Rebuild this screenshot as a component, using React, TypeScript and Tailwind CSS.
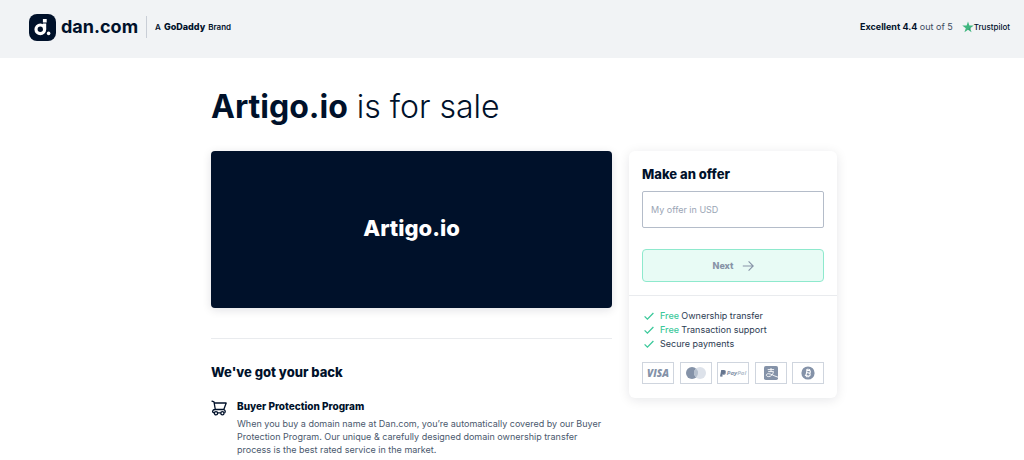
import type { ReactNode } from "react";

const perks = [
  { free: true, text: "Ownership transfer" },
  { free: true, text: "Transaction support" },
  { free: false, text: "Secure payments" },
];

function DanMark() {
  return (
    <svg viewBox="0 0 27 27" className="size-[27px]" aria-hidden="true">
      <rect width="27" height="27" rx="8" fill="#00112a" />
      <circle cx="11.3" cy="15.3" r="4.3" fill="none" stroke="#fff" strokeWidth="3.2" />
      <path d="M13.900 9.600h3.300v5.700h-3.300z" fill="#fff" />
      <path d="M13.900 5h3.800v3.600h-3.800z" fill="#fff" />
      <circle cx="19.600" cy="19.400" r="1.800" fill="#fff" />
    </svg>
  );
}

function PaymentBox({ label, children }: { label: string; children: ReactNode }) {
  return (
    <li
      aria-label={label}
      className="flex h-[22px] w-8 items-center justify-center border border-[#cfd5de] bg-white"
    >
      {children}
    </li>
  );
}

function Header() {
  return (
    <header className="flex h-[58px] items-center justify-between bg-[#f1f3f5] pr-[14px] pb-1 pl-[29px]">
      <div className="flex items-center">
        <a href="#home" className="flex items-center gap-[5px]">
          <DanMark />
          <span className="text-lg leading-6 font-bold">dan.com</span>
        </a>
        <div className="ml-2 flex h-[22px] items-center gap-[3px] border-l border-[#c9ced6] pl-2 text-[8px] font-semibold">
          <span>A</span>
          <span className="text-[9px] font-extrabold">GoDaddy</span>
          <span>Brand</span>
        </div>
      </div>
      <a href="#reviews" className="flex items-center text-[9px]">
        <span className="text-[#3c4a60]">
          <strong className="font-bold text-[#00112a]">Excellent 4.4</strong> out of 5
        </span>
        <svg viewBox="0 0 24 24" className="ml-[9px] size-3" aria-hidden="true">
          <path d="M12 .8l2.7 8.3h8.8l-7.1 5.2 2.7 8.400-7.100-5.200-7.100 5.200 2.700-8.400L.5 9.100h8.800z" fill="#3fb67f" />
          <path d="M17 16.200l-.6-1.900L12 17.500z" fill="#1d6b50" />
        </svg>
        <span className="text-[8px] font-medium">Trustpilot</span>
      </a>
    </header>
  );
}

function OfferCard() {
  return (
    <aside className="w-[208px] shrink-0 rounded-md bg-white shadow-[0_2px_12px_rgba(0,17,42,0.1)]">
      <form className="px-[13px] pt-[13px] pb-[13px]">
        <label htmlFor="offer" className="block text-[13px] leading-5 font-extrabold">
          Make an offer
        </label>
        <input
          id="offer"
          type="text"
          placeholder="My offer in USD"
          className="mt-[7px] block h-[37px] w-full rounded-xs border border-[#b4bcc9] bg-white px-2 text-[9px] outline-none placeholder:text-[#9aa5b5]"
        />
        <button
          type="button"
          className="mt-[21px] flex h-[33px] w-full items-center justify-center gap-2 rounded border border-[#8ee9cd] bg-[#e8fbf5] text-[9px] font-extrabold text-[#8793a7]"
        >
          Next
          <svg viewBox="0 0 12 12" className="size-3" fill="none" stroke="currentColor" strokeWidth="1.1" aria-hidden="true">
            <path d="M.8 6h10.400M6.600 1.400L11.200 6l-4.600 4.600" />
          </svg>
        </button>
      </form>
      <div className="border-t border-[#e9ebee] px-[13px] pt-[13px] pb-[14px]">
        <ul className="text-[9px] leading-[14px] text-[#2c3b52]">
          {perks.map((perk) => (
            <li key={perk.text} className="flex items-center gap-[6px] pl-[2px]">
              <svg viewBox="0 0 10 8" className="h-2 w-[10px]" fill="none" stroke="#3cc99b" strokeWidth="1.3" aria-hidden="true">
                <path d="M.6 4.400l2.800 2.700L9.400 1" />
              </svg>
              <span>
                {perk.free && <span className="font-medium text-[#3cc99b]">Free </span>}
                {perk.text}
              </span>
            </li>
          ))}
        </ul>
        <ul className="mt-[11px] flex justify-between text-[#8492a8]">
          <PaymentBox label="Visa">
            <span className="font-['Open_Sans',sans-serif] text-[10px] leading-none font-extrabold italic">VISA</span>
          </PaymentBox>
          <PaymentBox label="Mastercard">
            <svg viewBox="0 0 20 12" className="h-3 w-5" aria-hidden="true">
              <circle cx="6" cy="6" r="6" fill="#8492a8" />
              <circle cx="14" cy="6" r="6" fill="#dde2ea" />
              <path d="M10 1.500a6 6 0 0 1 0 9a6 6 0 0 1 0-9z" fill="#b5bfcd" />
            </svg>
          </PaymentBox>
          <PaymentBox label="PayPal">
            <svg viewBox="0 0 6 7" className="mr-px h-[7px] w-[6px]" aria-hidden="true">
              <path d="M1.200 0h2.600C5.400 0 6 .9 5.700 2.200 5.400 3.700 4.400 4.300 3 4.300H2.200L1.800 6.400H0z" fill="#66758e" />
              <path d="M5.700 1.800c.5 1.900-.5 3.200-2.400 3.200h-.6L2.300 7H1.400l.6-2.700h1c1.400 0 2.400-.8 2.700-2.500z" fill="#8492a8" />
            </svg>
            <span className="font-['Open_Sans',sans-serif] text-[6px] leading-none font-bold italic">
              Pay<span className="text-[#b5bfcd]">Pal</span>
            </span>
          </PaymentBox>
          <PaymentBox label="Alipay">
            <svg viewBox="0 0 14 14" className="size-[14px]" aria-hidden="true">
              <rect width="14" height="14" rx="1.800" fill="#8492a8" />
              <path
                d="M3.700 3.600h6.400M7 2v3.600M4.200 5.600h5.300C9 8.200 7.200 10.600 4.600 10.600c-3.100 0-2.700-2.900-.3-2.900C7 7.700 9 9.600 14 11.200"
                fill="none"
                stroke="#fff"
                strokeWidth=".9"
              />
            </svg>
          </PaymentBox>
          <PaymentBox label="Bitcoin">
            <svg viewBox="0 0 14 14" className="size-[14px]" aria-hidden="true">
              <circle cx="7" cy="7" r="6.600" fill="#8492a8" />
              <g transform="rotate(12 7 7)" fill="none" stroke="#fff" strokeWidth="1.100">
                <path d="M4.400 4.200h3.200c2 0 2 2.700 0 2.700H5.400h2.400c2.300 0 2.300 3 0 3H4.400M5.500 4.200v5.700M6.200 2.800v1.400M7.800 2.800v1.400M6.200 9.900v1.400M7.800 9.900v1.400" />
              </g>
            </svg>
          </PaymentBox>
        </ul>
      </div>
    </aside>
  );
}

export default function App() {
  return (
    <div className="bg-white font-[Inter,sans-serif] text-[#00112a]">
      <Header />
      <main className="mx-auto max-w-[650px] pt-[29px] pl-6">
        <h1 className="text-[32px] leading-10 font-light">
          <strong className="font-bold">Artigo.io</strong> is for sale
        </h1>
        <div className="mt-6 flex items-start gap-[17px]">
          <div className="min-w-0 flex-1">
            <div className="flex h-[157px] items-center justify-center rounded bg-[#00112a] pb-[2px] text-[22px] font-extrabold text-white shadow-[0_2px_10px_rgba(0,17,42,0.12)]">
              Artigo.io
            </div>
            <hr className="mt-[30px] border-[#e9ebee]" />
            <section>
              <h2 className="mt-[23px] text-[13px] leading-5 font-extrabold">We've got your back</h2>
              <div className="mt-[17px] flex gap-[10px]">
                <svg
                  viewBox="0 0 16 16"
                  className="mt-px size-4 shrink-0"
                  fill="none"
                  stroke="#00112a"
                  strokeWidth="1.300"
                  strokeLinecap="round"
                  strokeLinejoin="round"
                  aria-hidden="true"
                >
                  <path d="M1 1.200l2 .6 1.300 7.700h8.500L15.200 3H3.300M4.300 9.500c-3.200.1-3.600 3.300-.9 3.300M12.800 9.500c1.500.8 1.700 2 1 3.300M6.600 12.800h3" />
                  <circle cx="5" cy="13.300" r="1.600" />
                  <circle cx="11.400" cy="13.300" r="1.600" />
                </svg>
                <div className="min-w-0">
                  <h3 className="text-[10px] leading-[14px] font-extrabold">Buyer Protection Program</h3>
                  <p className="mt-1 text-[9px] leading-[13px] text-[#4a586d]">
                    When you buy a domain name at Dan.com, you’re automatically covered by our Buyer Protection
                    Program. Our unique &amp; carefully designed domain ownership transfer process is the best rated
                    service in the market.
                  </p>
                </div>
              </div>
            </section>
          </div>
          <OfferCard />
        </div>
      </main>
    </div>
  );
}
